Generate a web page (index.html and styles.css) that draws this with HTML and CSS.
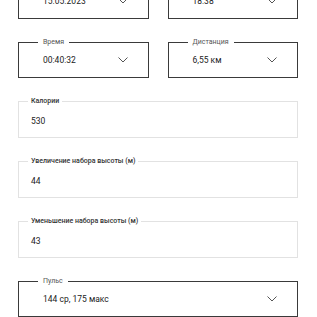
FILE: index.html
```html
<!DOCTYPE html>
<html lang="ru">
<head>
    <meta charset="UTF-8">
    <meta name="viewport" content="width=device-width, initial-scale=1.0">
    <title>Тренировка</title>
    <link rel="stylesheet" href="styles.css">
</head>
<body>
    <div class="form">
        <div class="pair">
            <fieldset class="select">
                <legend>Дата</legend>
                <div class="row">
                    <span>15.05.2023</span>
                    <svg class="chevron" width="10" height="6" viewBox="0 0 10 6"><polyline points="0.5,0.5 5,5 9.5,0.5"/></svg>
                </div>
            </fieldset>
            <fieldset class="select">
                <legend>Время начала</legend>
                <div class="row">
                    <span>18:38</span>
                    <svg class="chevron" width="10" height="6" viewBox="0 0 10 6"><polyline points="0.5,0.5 5,5 9.5,0.5"/></svg>
                </div>
            </fieldset>
        </div>

        <div class="pair">
            <fieldset class="select">
                <legend>Время</legend>
                <div class="row">
                    <span>00:40:32</span>
                    <svg class="chevron" width="10" height="6" viewBox="0 0 10 6"><polyline points="0.5,0.5 5,5 9.5,0.5"/></svg>
                </div>
            </fieldset>
            <fieldset class="select">
                <legend>Дистанция</legend>
                <div class="row">
                    <span>6,55 км</span>
                    <svg class="chevron" width="10" height="6" viewBox="0 0 10 6"><polyline points="0.5,0.5 5,5 9.5,0.5"/></svg>
                </div>
            </fieldset>
        </div>

        <fieldset class="input">
            <legend>Калории</legend>
            <div class="row">530</div>
        </fieldset>

        <fieldset class="input">
            <legend>Увеличение набора высоты (м)</legend>
            <div class="row">44</div>
        </fieldset>

        <fieldset class="input">
            <legend>Уменьшение набора высоты (м)</legend>
            <div class="row">43</div>
        </fieldset>

        <fieldset class="select">
            <legend>Пульс</legend>
            <div class="row">
                <span>144 ср, 175 макс</span>
                <svg class="chevron" width="10" height="6" viewBox="0 0 10 6"><polyline points="0.5,0.5 5,5 9.5,0.5"/></svg>
            </div>
        </fieldset>
    </div>
</body>
</html>
```

FILE: styles.css
```css
body {
    margin: 0;
    background-color: #fff;
    color: #222;
    font-family: Roboto, "Liberation Sans", sans-serif;
}
.form {
    margin-top: -21px; /* страница прокручена */
    padding: 0 19px 0 18px;
    display: flex;
    flex-direction: column;
    gap: 19px;
}
.pair {
    display: grid;
    grid-template-columns: 1fr 1fr;
    gap: 19px;
}
fieldset {
    margin: 0;
    min-width: 0;
}
legend {
    font-size: 7px;
    line-height: 8px;
}
.row {
    display: flex;
    align-items: center;
    justify-content: space-between;
    font-size: 8.5px;
}

/* выпадающие списки */
.select {
    border: 1px solid #3a3a3a;
    padding: 0 20px 3px 19px;
}
.select legend {
    padding: 0 5px;
    color: #555;
}
.select .row {
    height: 28px;
    padding-left: 5px;
}
.chevron {
    fill: none;
    stroke: #555;
    stroke-width: 1;
}

/* поля ввода */
.input {
    border: 1px solid #e2e2e2;
    padding: 0 12px 1px 9px;
}
.input legend {
    padding: 0 3px;
    color: #333;
    font-weight: 500;
}
.input .row {
    height: 31px;
    padding-left: 3px;
}
```
